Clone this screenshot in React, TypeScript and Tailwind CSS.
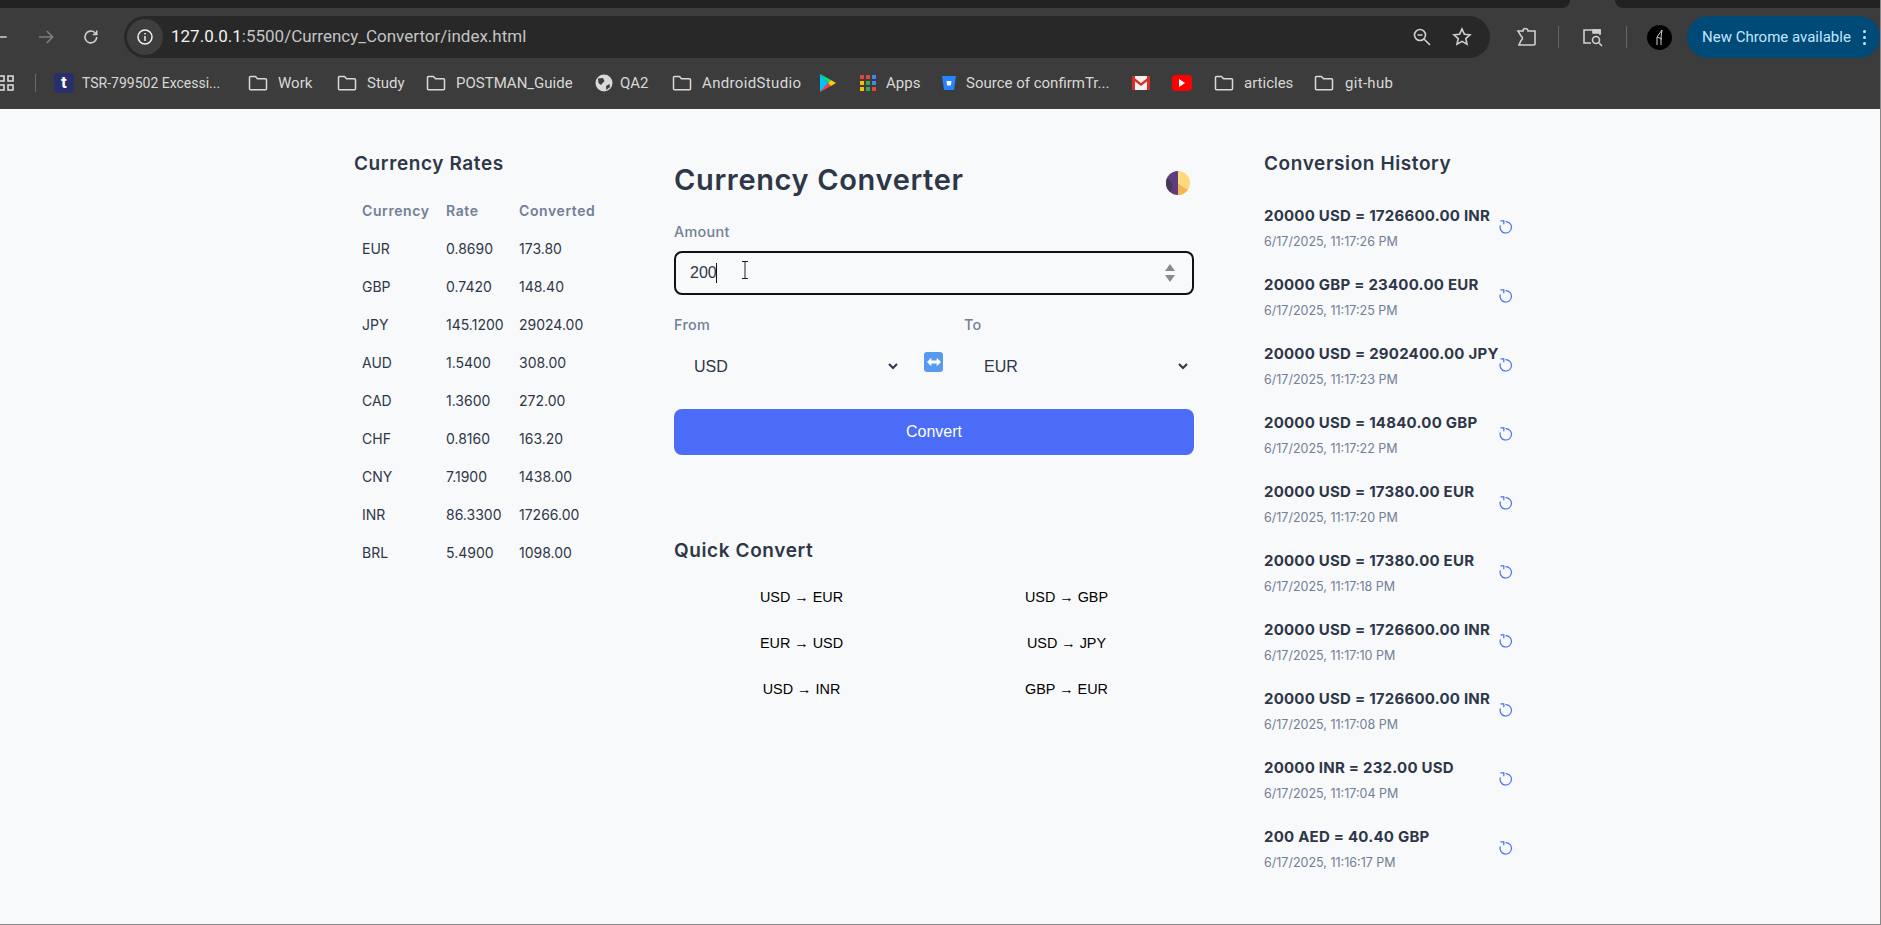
const rates = [
  ["EUR", "0.8690", "173.80"],
  ["GBP", "0.7420", "148.40"],
  ["JPY", "145.1200", "29024.00"],
  ["AUD", "1.5400", "308.00"],
  ["CAD", "1.3600", "272.00"],
  ["CHF", "0.8160", "163.20"],
  ["CNY", "7.1900", "1438.00"],
  ["INR", "86.3300", "17266.00"],
  ["BRL", "5.4900", "1098.00"],
];

const history = [
  ["20000 USD = 1726600.00 INR", "6/17/2025, 11:17:26 PM"],
  ["20000 GBP = 23400.00 EUR", "6/17/2025, 11:17:25 PM"],
  ["20000 USD = 2902400.00 JPY", "6/17/2025, 11:17:23 PM"],
  ["20000 USD = 14840.00 GBP", "6/17/2025, 11:17:22 PM"],
  ["20000 USD = 17380.00 EUR", "6/17/2025, 11:17:20 PM"],
  ["20000 USD = 17380.00 EUR", "6/17/2025, 11:17:18 PM"],
  ["20000 USD = 1726600.00 INR", "6/17/2025, 11:17:10 PM"],
  ["20000 USD = 1726600.00 INR", "6/17/2025, 11:17:08 PM"],
  ["20000 INR = 232.00 USD", "6/17/2025, 11:17:04 PM"],
  ["200 AED = 40.40 GBP", "6/17/2025, 11:16:17 PM"],
];

const quick = ["USD → EUR", "USD → GBP", "EUR → USD", "USD → JPY", "USD → INR", "GBP → EUR"];

function Folder({ className = "" }: { className?: string }) {
  return (
    <svg width="20" height="18" viewBox="0 0 20 18" fill="none" stroke="#d9d9d9" strokeWidth="1.5" className={className}>
      <path d="M1.500 3.500a1 1 0 0 1 1-1h5l2 2.200h8a1 1 0 0 1 1 1v9a1 1 0 0 1-1 1h-15a1 1 0 0 1-1-1z" />
    </svg>
  );
}

function BrowserChrome() {
  return (
    <div className="h-[109px] bg-[#3c3c3c] font-['Roboto',sans-serif] overflow-hidden">
      <div className="h-[8px] flex">
        <div className="w-[1570px] bg-[#202222] rounded-br-[10px]" />
        <div className="w-[45px]" />
        <div className="flex-1 bg-[#202222] rounded-bl-[10px]" />
      </div>
      <div className="h-[42px] mt-[8px] flex items-center">
        <svg width="18" height="18" viewBox="0 0 18 18" fill="none" stroke="#d0d0d0" strokeWidth="1.6" className="ml-[-9px]">
          <path d="M16 9H2M8 3 2 9l6 6" />
        </svg>
        <svg width="18" height="18" viewBox="0 0 18 18" fill="none" stroke="#7c7c7c" strokeWidth="1.6" className="ml-[28px]">
          <path d="M2 9h14M10 3l6 6-6 6" />
        </svg>
        <svg width="18" height="18" viewBox="0 0 18 18" fill="none" stroke="#d0d0d0" strokeWidth="1.6" className="ml-[28px]">
          <path d="M15 9a6 6 0 1 1-1.800-4.300L15 6.500M15 2.500v4h-4" />
        </svg>
        <div className="ml-[24px] w-[1366px] shrink-0 h-[42px] rounded-full bg-[#282828] flex items-center">
          <div className="ml-[3px] w-[36px] h-[36px] rounded-full bg-[#3e3e3e] flex items-center justify-center">
            <svg width="18" height="18" viewBox="0 0 18 18" fill="none" stroke="#eeeeee" strokeWidth="1.5">
              <circle cx="9" cy="9" r="7" />
              <path d="M9 8v5M9 5v1.600" />
            </svg>
          </div>
          <span className="ml-[8px] text-[17px] text-[#f2f2f2] whitespace-nowrap">
            127.0.0.1<span className="text-[#c4c4c4]">:5500/Currency_Convertor/index.html</span>
          </span>
          <svg width="20" height="20" viewBox="0 0 20 20" fill="none" stroke="#d0d0d0" strokeWidth="1.6" className="ml-auto">
            <circle cx="8" cy="8" r="5.500" />
            <path d="M5.500 8h5M12 12l6 6" />
          </svg>
          <svg width="20" height="20" viewBox="0 0 20 20" fill="none" stroke="#d0d0d0" strokeWidth="1.6" className="ml-[20px] mr-[18px]">
            <path d="m10 2 2.400 5.200 5.600.6-4.200 3.800 1.200 5.600-5-2.900-5 2.900 1.200-5.600L2 7.800l5.600-.6z" />
          </svg>
        </div>
        <svg width="22" height="22" viewBox="0 0 22 22" fill="none" stroke="#d0d0d0" strokeWidth="1.6" className="ml-[25px] shrink-0">
          <path d="M3 5h5a2.500 2.500 0 0 1 5 0h7v13a1 1 0 0 1-1 1H4l2-4.500a2.500 2.500 0 0 0 0-4.500L3 5z" />
        </svg>
        <div className="ml-[21px] w-px h-[22px] bg-[#666666] shrink-0" />
        <svg width="24" height="22" viewBox="0 0 24 22" fill="none" stroke="#d0d0d0" strokeWidth="1.6" className="ml-[22px] shrink-0">
          <path d="M10 17H3V4h16v5" />
          <path d="M12 4h7v3h-7z" fill="#d0d0d0" />
          <circle cx="15" cy="14" r="3.500" />
          <path d="m18 17 3 3" />
        </svg>
        <div className="ml-[21px] w-px h-[22px] bg-[#666666] shrink-0" />
        <div className="ml-[20px] w-[25px] h-[25px] rounded-full bg-black flex items-center justify-center shrink-0">
          <svg width="12" height="18" viewBox="0 0 12 18" fill="none" stroke="#cfcfcf" strokeWidth="1">
            <path d="M3 17V9l5-7-1 7v8M3 9l5 2" />
          </svg>
        </div>
        <div className="ml-[15px] w-[193px] h-[42px] rounded-full bg-[#004a77] flex items-center shrink-0">
          <span className="ml-[15px] text-[15px] text-[#c2e7ff] whitespace-nowrap">New Chrome available</span>
          <span className="ml-auto mr-[14px] flex flex-col gap-[3px]">
            <i className="block w-[3px] h-[3px] rounded-full bg-[#c2e7ff]" />
            <i className="block w-[3px] h-[3px] rounded-full bg-[#c2e7ff]" />
            <i className="block w-[3px] h-[3px] rounded-full bg-[#c2e7ff]" />
          </span>
        </div>
      </div>
      <div className="h-[34px] mt-[8px] flex items-center text-[15px] text-[#d8d8d8] whitespace-nowrap">
        <svg width="16" height="16" viewBox="0 0 16 16" fill="none" stroke="#d9d9d9" strokeWidth="1.6" className="ml-[-2px]">
          <rect x="1" y="1" width="5" height="5" />
          <rect x="10" y="1" width="5" height="5" />
          <rect x="1" y="10" width="5" height="5" />
          <rect x="10" y="10" width="5" height="5" />
        </svg>
        <div className="ml-[21px] w-px h-[18px] bg-[#6a6a6a]" />
        <div className="ml-[18px] w-[20px] h-[20px] rounded-[4px] bg-[#28306b] text-white text-[17px] font-bold flex items-center justify-center">t</div>
        <span className="ml-[8px] w-[140px] text-[14px]">TSR-799502 Excessi...</span>
        <Folder className="ml-[26px]" />
        <span className="ml-[10px] w-[36px]">Work</span>
        <Folder className="ml-[23px]" />
        <span className="ml-[10px] w-[37px]">Study</span>
        <Folder className="ml-[22px]" />
        <span className="ml-[10px] w-[116px]">POSTMAN_Guide</span>
        <svg width="18" height="18" viewBox="0 0 18 18" className="ml-[23px]">
          <circle cx="9" cy="9" r="8.500" fill="#d9d9d9" />
          <path d="M3 4.500 8 4l1.500 3L6 11 3.500 9zM11 12l3.500-2 .5 3-3.500 3z" fill="#3c3c3c" />
        </svg>
        <span className="ml-[7px] w-[29px]">QA2</span>
        <Folder className="ml-[23px]" />
        <span className="ml-[10px] w-[100px] tracking-[0.35px]">AndroidStudio</span>
        <svg width="16" height="20" viewBox="0 0 16 20" className="ml-[18px]">
          <path d="M0 1v18l8-9z" fill="#00c3ff" />
          <path d="M0 1l8 9 3-3z" fill="#00e676" />
          <path d="M0 19l8-9 3 3z" fill="#ff3d47" />
          <path d="M11 7l5 3-5 3-3-3z" fill="#ffce00" />
        </svg>
        <svg width="18" height="18" viewBox="0 0 18 18" className="ml-[23px]">
          <path d="M1 1h4v4H1z" fill="#ea4335" /><path d="M7 1h4v4H7z" fill="#ea4335" /><path d="M13 1h4v4h-4z" fill="#4285f4" />
          <path d="M1 7h4v4H1z" fill="#fbbc05" /><path d="M7 7h4v4H7z" fill="#34a853" /><path d="M13 7h4v4h-4z" fill="#4285f4" />
          <path d="M1 13h4v4H1z" fill="#fbbc05" /><path d="M7 13h4v4H7z" fill="#34a853" /><path d="M13 13h4v4h-4z" fill="#ea4335" />
        </svg>
        <span className="ml-[9px] w-[33px]">Apps</span>
        <svg width="16" height="16" viewBox="0 0 16 16" className="ml-[22px]">
          <path d="M1 1h14l-2 14H3z" fill="#2684ff" />
          <path d="M5.500 6h5l-.7 4.500H6.200z" fill="#ffffff" />
        </svg>
        <span className="ml-[9px] w-[142px]">Source of confirmTr...</span>
        <svg width="18" height="16" viewBox="0 0 18 16" className="ml-[24px]">
          <rect y="1" width="18" height="14" fill="#f2f2f2" />
          <path d="M0 1h3v14H0zM15 1h3v14h-3z" fill="#d93025" />
          <path d="M0 1l9 7 9-7v3L9 11 0 4z" fill="#d93025" />
        </svg>
        <div className="ml-[22px] w-[20px] h-[16px] rounded-[4px] bg-[#ff0000] flex items-center justify-center">
          <svg width="6" height="8" viewBox="0 0 6 8"><path d="M0 0l6 4-6 4z" fill="#ffffff" /></svg>
        </div>
        <Folder className="ml-[22px]" />
        <span className="ml-[10px] w-[47px]">articles</span>
        <Folder className="ml-[23px]" />
        <span className="ml-[11px] tracking-[0.3px]">git-hub</span>
      </div>
    </div>
  );
}

function RatesColumn() {
  return (
    <aside className="w-[320px] shrink-0 pt-[42px]">
      <h2 className="text-[19px] leading-[26px] font-semibold text-[#2d3748] tracking-[0.6px]">Currency Rates</h2>
      <table className="mt-[14px] table-fixed w-[250px] text-[14px] text-[#2d3748]">
        <thead>
          <tr className="h-[38px] text-left text-[#718096] text-[14px] tracking-[0.6px]">
            <th className="w-[84px] pl-[8px] font-semibold">Currency</th>
            <th className="w-[73px] pl-[8px] font-semibold">Rate</th>
            <th className="pl-[8px] font-semibold">Converted</th>
          </tr>
        </thead>
        <tbody>
          {rates.map((r) => (
            <tr key={r[0]} className="h-[38px]">
              <td className="pl-[8px]">{r[0]}</td>
              <td className="pl-[8px]">{r[1]}</td>
              <td className="pl-[8px] whitespace-nowrap">{r[2]}</td>
            </tr>
          ))}
        </tbody>
      </table>
    </aside>
  );
}

function ConverterColumn() {
  return (
    <main className="w-[520px] shrink-0 pt-[49px]">
      <div className="flex items-center justify-between h-[44px]">
        <h1 className="text-[29px] leading-[44px] font-semibold text-[#2d3748] tracking-[0.65px]">Currency Converter</h1>
        <svg width="24" height="24" viewBox="0 0 24 24" className="mr-[4px] mt-[6px]">
          <circle cx="12" cy="12" r="12" fill="#ffd97d" />
          <path d="M12 0a12 12 0 0 0 0 24z" fill="#5c3d7d" />
          <path d="M12 24a12 12 0 0 0 10-5.500C18 17 14 14 12 12z" fill="#f6b352" />
          <path d="M1 7a12 12 0 0 0 3 14c3-3 4-10-3-14z" fill="#463a5a" />
        </svg>
      </div>
      <label className="block mt-[19px] text-[14.4px] leading-[22px] font-medium text-[#718096] tracking-[0.3px]">Amount</label>
      <div className="relative mt-[8px]">
        <input
          defaultValue="200"
          className="block w-full h-[44px] rounded-[8px] border-2 border-[#111111] bg-transparent pl-[14px] outline-none font-['Liberation_Sans',sans-serif] text-[16px] text-[#2d3748]"
        />
        <span className="absolute left-[42px] top-[12px] w-px h-[20px] bg-[#111111]" />
        <svg width="8" height="18" viewBox="0 0 8 18" fill="none" stroke="#222222" strokeWidth="1" className="absolute left-[67px] top-[10px]">
          <path d="M1 .5h6M4 .5v17M1 17.500h6" />
        </svg>
        <svg width="10" height="18" viewBox="0 0 10 18" className="absolute right-[19px] top-[13px]">
          <path d="M5 0l5 7H0z" fill="#8a8a8a" />
          <path d="M5 18l5-7H0z" fill="#8a8a8a" />
        </svg>
      </div>
      <div className="flex mt-[19px]">
        <div className="w-[230px]">
          <label className="block text-[14.4px] leading-[22px] font-medium text-[#718096] tracking-[0.3px]">From</label>
          <select defaultValue="USD" className="block w-[227px] mt-[8px] h-[44px] pl-[16px] pr-[4px] bg-transparent outline-none font-['Liberation_Sans',sans-serif] text-[16px] text-[#2d3748] appearance-auto">
            <option>USD</option>
            <option>EUR</option>
          </select>
        </div>
        <div className="w-[60px] flex justify-center pt-[38px] pr-[1px]">
          <div className="w-[19px] h-[20px] rounded-[3px] bg-[#589bee] flex items-center justify-center">
            <svg width="14" height="10" viewBox="0 0 13 9" fill="#ffffff">
              <path d="M0 4.500 4 .5v2.500h5V.5l4 4-4 4V6H4v2.500z" />
            </svg>
          </div>
        </div>
        <div className="w-[230px]">
          <label className="block text-[14.4px] leading-[22px] font-medium text-[#718096] tracking-[0.3px]">To</label>
          <select defaultValue="EUR" className="block w-[227px] mt-[8px] h-[44px] pl-[16px] pr-[4px] bg-transparent outline-none font-['Liberation_Sans',sans-serif] text-[16px] text-[#2d3748] appearance-auto">
            <option>EUR</option>
            <option>USD</option>
          </select>
        </div>
      </div>
      <button className="block w-full h-[46px] mt-[21px] rounded-[8px] bg-[#4a6cf7] text-white font-['Liberation_Sans',sans-serif] text-[16px]">Convert</button>
      <h2 className="mt-[83px] text-[19px] leading-[26px] font-semibold text-[#2d3748] tracking-[0.6px]">Quick Convert</h2>
      <div className="mt-[16px] grid grid-cols-2 gap-x-[10px] gap-y-[10px]">
        {quick.map((q) => (
          <button key={q} className="h-[36px] font-['Liberation_Sans',sans-serif] text-[14.4px] text-black">{q}</button>
        ))}
      </div>
    </main>
  );
}

function HistoryColumn() {
  return (
    <aside className="w-[300px] shrink-0 ml-[70px] pt-[42px]">
      <h2 className="text-[19px] leading-[26px] font-semibold text-[#2d3748] tracking-[0.6px]">Conversion History</h2>
      <ul className="mt-[16px]">
        {history.map((h) => (
          <li key={h[1]} className="h-[69px] flex">
            <div className="w-[236px] shrink-0 pt-[11px]">
              <div className="text-[15px] leading-[24px] font-bold text-[#2d3748] whitespace-nowrap tracking-[0.23px]">{h[0]}</div>
              <div className="mt-[4px] text-[12.5px] leading-[20px] text-[#718096] whitespace-nowrap">{h[1]}</div>
            </div>
            <svg width="14" height="14" viewBox="0 0 14 14" fill="none" stroke="#4a6cf7" strokeWidth="1.2" className="ml-[-1px] mt-[27px] shrink-0">
              <path d="M6.500 1.600A5.700 5.700 0 1 1 1.400 5.400" />
              <path d="M1.500 .8h3.300v3.400" />
            </svg>
          </li>
        ))}
      </ul>
    </aside>
  );
}

export default function App() {
  return (
    <div className="h-[925px] overflow-hidden bg-[#f8f9fa] font-['Inter',sans-serif] border-r border-b border-[#888888]">
      <BrowserChrome />
      <div className="flex pl-[354px]">
        <RatesColumn />
        <ConverterColumn />
        <HistoryColumn />
      </div>
    </div>
  );
}
